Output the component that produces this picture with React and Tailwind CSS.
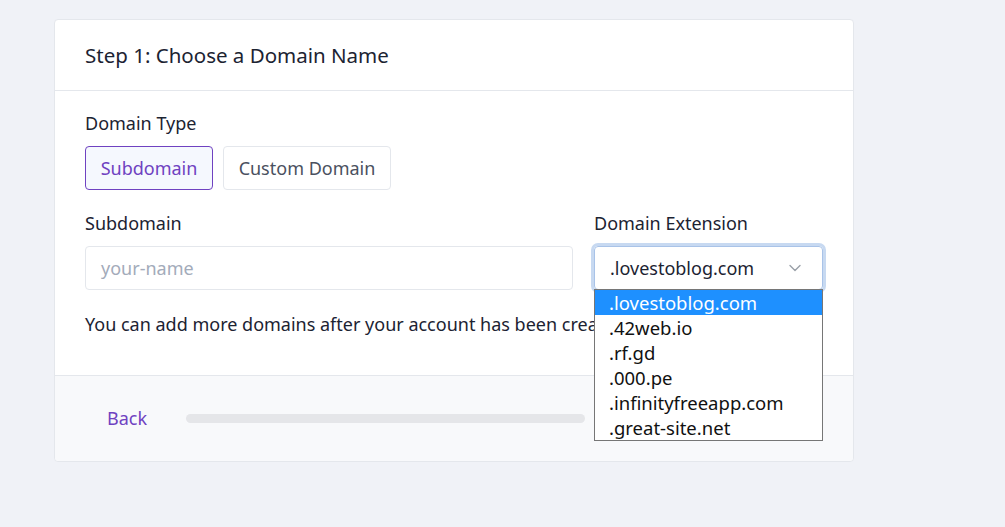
import React from "react";

function Chevron() {
  return (
    <svg width="14" height="14" viewBox="0 0 14 14" fill="none" stroke="#9aa0a8" strokeWidth="1.4" strokeLinecap="round" strokeLinejoin="round">
      <path d="M2 4.5 L7 9.5 L12 4.5" />
    </svg>
  );
}

export default function App() {
  const options = [".lovestoblog.com", ".42web.io", ".rf.gd", ".000.pe", ".infinityfreeapp.com", ".great-site.net"];
  return (
    <div className="min-h-[527px] w-full bg-[#f0f2f7] pt-[19px] pl-[54px]" style={{ fontFamily: '"Noto Sans", "Open Sans", sans-serif' }}>
      <div className="w-[800px] rounded-[4px] border border-[#e4e7ec] bg-white text-[#1c2332]">
        <div className="flex h-[71px] items-center border-b border-[#e4e7ec] px-[30px] pt-[1px] text-[20.5px]">
          Step 1: Choose a Domain Name
        </div>
        <div className="px-[30px] pt-[20px] pb-[39px]">
          <div className="h-[24px] text-[18px] leading-[24px]">Domain Type</div>
          <div className="mt-[11px] flex gap-[10px]">
            <button className="h-[44px] w-[128px] rounded-[4px] border border-[#6f42c1] bg-[#f5f8fe] text-[18px] text-[#6f42c1]">Subdomain</button>
            <button className="h-[44px] w-[168px] rounded-[4px] border border-[#e4e7ec] bg-white text-[18px] text-[#4a5160]">Custom Domain</button>
          </div>
          <div className="mt-[21px] flex gap-[21px]">
            <div className="w-[488px]">
              <div className="h-[24px] text-[18px] leading-[24px]">Subdomain</div>
              <div className="mt-[11px] flex h-[44px] items-center rounded-[4px] border border-[#e4e7ec] pl-[15px] text-[18px] text-[#a3abba]">your-name</div>
            </div>
            <div className="relative w-[229px]">
              <div className="h-[24px] text-[18px] leading-[24px]">Domain Extension</div>
              <div className="mt-[11px] flex h-[44px] items-center justify-between rounded-[4px] border border-[#a9c3e8] pl-[15px] pr-[20px] text-[18px] shadow-[0_0_0_3px_#c7d9f1]">
                <span>.lovestoblog.com</span>
                <Chevron />
              </div>
              <div className="absolute left-0 top-[78px] z-10 w-[229px] border border-[#767676] bg-white text-[18.5px] leading-[25px] text-[#111]">
                {options.map((o, i) => (
                  <div key={o} className={i === 0 ? "h-[25px] bg-[#1e90ff] pl-[14px] text-white" : "h-[25px] pl-[14px]"}>{o}</div>
                ))}
              </div>
            </div>
          </div>
          <div className="mt-[22px] h-[24px] whitespace-nowrap text-[18px] leading-[24px]">You can add more domains after your account has been created.</div>
        </div>
        <div className="flex h-[86px] items-center rounded-b-[4px] border-t border-[#e4e7ec] bg-[#f8f9fb] pl-[31px]">
          <span className="px-[21px] text-[18px] text-[#6f42c1]">Back</span>
          <div className="ml-[18px] h-[9px] w-[399px] rounded-full bg-[#e5e6e9]"></div>
        </div>
      </div>
    </div>
  );
}
